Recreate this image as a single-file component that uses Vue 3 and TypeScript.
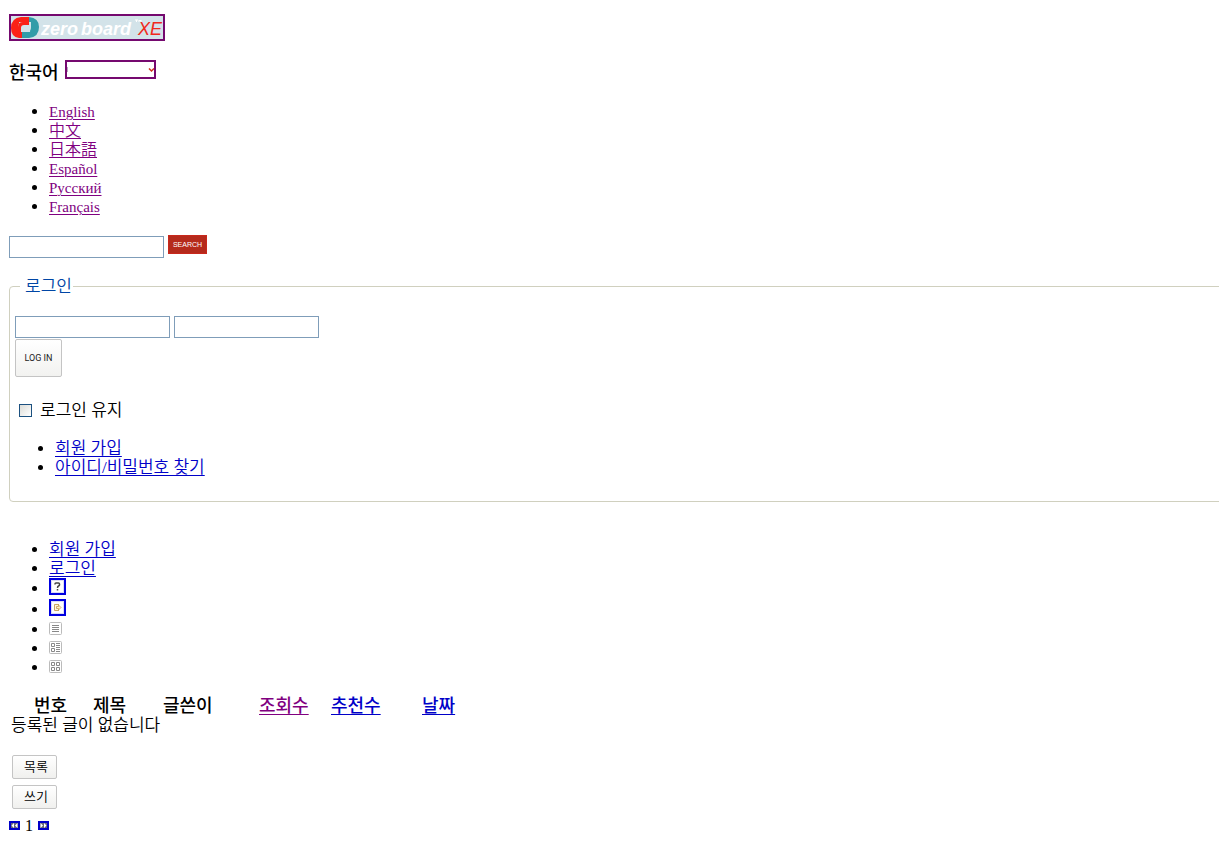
<script setup lang="ts">
interface Column {
  key: string
  label: string
  sortable: boolean
  visited?: boolean
}

const languages: { label: string; cjk: boolean }[] = [
  { label: 'English', cjk: false },
  { label: '中文', cjk: true },
  { label: '日本語', cjk: true },
  { label: 'Español', cjk: false },
  { label: 'Русский', cjk: false },
  { label: 'Français', cjk: false },
]

const columns: Column[] = [
  { key: 'no', label: '번호', sortable: false },
  { key: 'title', label: '제목', sortable: false },
  { key: 'author', label: '글쓴이', sortable: false },
  { key: 'views', label: '조회수', sortable: true, visited: true },
  { key: 'votes', label: '추천수', sortable: true },
  { key: 'date', label: '날짜', sortable: true },
]
</script>

<template>
  <div class="page">
    <header>
      <a class="logo" href="#" aria-label="zeroboard XE">
        <svg width="152" height="23" viewBox="0 0 152 23">
          <rect width="152" height="23" fill="#d3e3e9" />
          <path d="M18 1H10Q0 2 0 12Q0 21 8 22H11V16H8V6H18Z" fill="#fb2117" />
          <path d="M18 1Q28 2 28 11Q28 21 18 22H11V16H19L20 6H18Z" fill="#319ca8" />
          <path d="M7 16V11Q7 6 12 6H20V11Q20 16 15 16Z" fill="#d3e3e9" />
          <path d="M7 11Q7 6 12 6H18V9H13Q10 9 10 12V16H7Z" fill="#fb2117" />
          <text x="30" y="19" class="logo-name">zero</text>
          <text x="70" y="19" class="logo-name">board</text>
          <path d="M124 4H127M125.500 4V6M128 6V4L129 5L130 4V6" stroke="#fff" stroke-width="1" fill="none" />
          <text x="127" y="19" class="logo-xe">XE</text>
        </svg>
      </a>
      <div class="language">
        <strong>한국어</strong>
        <button type="button" class="language-toggle" aria-label="한국어">
          <svg width="87" height="15" viewBox="0 0 87 15">
            <path d="M0.500 5V10" stroke="#b9a3bd" />
            <path d="M82 6.500L84.500 9L87 6.500" fill="none" stroke="#d0301c" stroke-width="1.500" />
          </svg>
        </button>
      </div>
      <ul class="links">
        <li v-for="lang in languages" :key="lang.label">
          <a class="visited" :class="lang.cjk ? 'han' : 'latin'" href="#">{{ lang.label }}</a>
        </li>
      </ul>
    </header>

    <form class="search" @submit.prevent>
      <input class="field wide" type="text" aria-label="Search">
      <button class="search-button" type="submit">SEARCH</button>
    </form>

    <form @submit.prevent>
      <fieldset>
        <legend>로그인</legend>
        <div class="credentials">
          <input class="field wide" type="text" aria-label="ID">
          <input class="field narrow" type="password" aria-label="Password">
        </div>
        <button class="login-button" type="submit">LOG IN</button>
        <div class="keep">
          <input id="keep" type="checkbox">
          <label for="keep">로그인 유지</label>
        </div>
        <ul class="links">
          <li><a href="#">회원 가입</a></li>
          <li><a href="#">아이디/비밀번호 찾기</a></li>
        </ul>
      </fieldset>
    </form>

    <ul class="links board-menu">
      <li><a href="#">회원 가입</a></li>
      <li><a href="#">로그인</a></li>
      <li class="framed">
        <a class="icon-link" href="#" aria-label="Help">
          <svg width="13" height="13" viewBox="0 0 13 13">
            <rect width="13" height="13" fill="#dcdcf4" />
            <rect x="1" y="1" width="11" height="11" fill="#fff" />
            <path d="M4 4.500V4Q4 3 5 3H7.500Q8.500 3 8.500 4V5Q8.500 5.500 7.500 6Q6.500 6.500 6.500 8M6.500 9V10.500" fill="none" stroke="#444" stroke-width="1.500" />
          </svg>
        </a>
      </li>
      <li class="framed">
        <a class="icon-link" href="#" aria-label="Login">
          <svg width="13" height="13" viewBox="0 0 13 13">
            <rect width="13" height="13" fill="#dcdcf4" />
            <rect x="1" y="1" width="11" height="11" fill="#fff" />
            <path d="M8 3.500H3.500V9.500H8" fill="#fff6dd" stroke="#c9a562" />
            <path d="M5.500 5.500H7.500V4L10 6.500L7.500 9V7.500H5.500Z" fill="#fff0bd" stroke="#c39b52" stroke-width="0.800" />
          </svg>
        </a>
      </li>
      <li>
        <a class="icon-link plain" href="#" aria-label="List">
          <svg width="13" height="13" viewBox="0 0 13 13">
            <rect x="0.500" y="0.500" width="12" height="12" rx="1" fill="#fff" stroke="#bbb" />
            <path d="M3 3.500H10M3 5.500H10M3 7.500H10M3 9.500H10" stroke="#888" />
          </svg>
        </a>
      </li>
      <li>
        <a class="icon-link plain" href="#" aria-label="Webzine">
          <svg width="13" height="13" viewBox="0 0 13 13">
            <rect x="0.500" y="0.500" width="12" height="12" rx="1" fill="#fff" stroke="#bbb" />
            <path d="M2.500 2.500H5.500V5.500H2.500ZM2.500 7.500H5.500V10.500H2.500ZM7 2.500H11M7 4.500H11M7 6.500H11M7 8.500H11M7 10.500H11" fill="none" stroke="#888" />
          </svg>
        </a>
      </li>
      <li>
        <a class="icon-link plain" href="#" aria-label="Gallery">
          <svg width="13" height="13" viewBox="0 0 13 13">
            <rect x="0.500" y="0.500" width="12" height="12" rx="1" fill="#fff" stroke="#bbb" />
            <path d="M2.500 2.500H5.500V5.500H2.500ZM7.500 2.500H10.500V5.500H7.500ZM2.500 7.500H5.500V10.500H2.500ZM7.500 7.500H10.500V10.500H7.500Z" fill="none" stroke="#888" />
          </svg>
        </a>
      </li>
    </ul>

    <table>
      <thead>
        <tr>
          <th v-for="col in columns" :key="col.key" :class="col.key" scope="col">
            <a v-if="col.sortable" href="#" :class="{ visited: col.visited }">{{ col.label }}</a>
            <template v-else>{{ col.label }}</template>
          </th>
        </tr>
      </thead>
      <tbody>
        <tr>
          <td :colspan="columns.length">등록된 글이 없습니다</td>
        </tr>
      </tbody>
    </table>

    <div class="actions">
      <button type="button">목록</button>
      <button type="button">쓰기</button>
    </div>

    <nav class="pages">
      <a href="#" aria-label="First page">
        <svg width="7" height="5" viewBox="0 0 7 5">
          <rect width="7" height="5" fill="#667" />
          <path d="M3 0V5L0.500 2.500ZM6.500 0V5L4 2.500Z" fill="#fff" />
        </svg>
      </a>
      <span>1</span>
      <a href="#" aria-label="Last page">
        <svg width="7" height="5" viewBox="0 0 7 5">
          <rect width="7" height="5" fill="#667" />
          <path d="M0.500 0V5L3 2.500ZM4 0V5L6.500 2.500Z" fill="#fff" />
        </svg>
      </a>
    </nav>
  </div>
</template>

<style>
body {
  margin: 0;
  background: #fff;
}
</style>

<style scoped>
.page {
  box-sizing: border-box;
  overflow: hidden;
  padding: 14px 0 8px 9px;
  color: #000;
  font-family: "Liberation Serif", "Noto Sans CJK KR", serif;
  font-size: 17px;
  font-weight: 350;
  line-height: 19px;
}

a {
  color: #0000c8;
  text-decoration-thickness: 1px;
  text-underline-offset: 2px;
}

a.visited {
  color: #800080;
}

svg {
  display: block;
}

button {
  box-sizing: border-box;
  padding: 0;
}

.logo {
  display: block;
  width: fit-content;
  border: 2px solid #75096f;
}

.logo-name {
  fill: #fff;
  font-family: "Liberation Sans", sans-serif;
  font-size: 18px;
  font-style: italic;
  font-weight: 700;
}

.logo-xe {
  fill: #f02a1c;
  font-family: "Liberation Sans", sans-serif;
  font-size: 18px;
  font-style: italic;
  font-weight: 400;
}

.language {
  display: flex;
  gap: 6px;
  margin-top: 19px;
}

.language strong {
  padding-top: 4px;
  font-size: 18px;
  font-weight: 500;
}

.language-toggle {
  height: 19px;
  border: 2px solid #75096f;
  background: #fff;
}

.links {
  margin: 0;
  padding: 0 0 0 40px;
}

header .links {
  margin-top: 19px;
}

.latin {
  font-size: 15px;
  line-height: 1;
}

.han {
  font-family: "Liberation Serif", "Noto Sans CJK JP", serif;
  font-size: 16px;
  line-height: 1;
}

.field {
  box-sizing: border-box;
  height: 22px;
  margin: 0;
  border: 1px solid #7f9db9;
  background: #fff;
}

.wide {
  width: 155px;
}

.narrow {
  width: 145px;
}

.search {
  display: flex;
  align-items: flex-start;
  gap: 4px;
  margin: 19px 0;
}

.search .field {
  margin-top: 1px;
}

.search-button {
  width: 39px;
  height: 19px;
  border: 1px solid #c9281c;
  background: #b52a1c;
  color: #fff;
  font: 400 7px/16px "Liberation Sans", sans-serif;
}

fieldset {
  min-width: 0;
  margin: 0 -6px 0 0;
  padding: 20px 5px 24px;
  border: 1px solid #d0d0bf;
  border-radius: 4px;
}

legend {
  margin-left: 5px;
  padding: 0 1px 0 5px;
  color: #0046a5;
}

.credentials {
  display: flex;
  gap: 4px;
}

.login-button {
  display: block;
  width: 47px;
  height: 38px;
  margin-top: 1px;
  border: 1px solid #c4c4c4;
  border-radius: 2px;
  background: linear-gradient(#fff, #f2f2f0);
  color: #222;
  font: 400 9px/36px Roboto, sans-serif;
}

.keep {
  display: flex;
  align-items: center;
  gap: 8px;
  margin: 24px 0 19px 4px;
}

.keep input {
  box-sizing: border-box;
  appearance: none;
  width: 13px;
  height: 13px;
  margin: 0;
  border: 1px solid #1c5180;
  background: linear-gradient(135deg, #dcdcd7, #fff);
}

.board-menu {
  margin-top: 38px;
}

.board-menu .framed {
  line-height: 21px;
}

.icon-link {
  display: inline-block;
  border: 2px solid #0000e0;
  vertical-align: top;
}

.icon-link.plain {
  margin-top: 2px;
  border: 0;
}

table {
  margin-top: 19px;
  border-collapse: collapse;
  table-layout: fixed;
  width: 473px;
  line-height: 20px;
}

th {
  padding: 0;
  font-size: 18px;
  font-weight: 500;
  text-align: left;
}

th.no {
  width: 59px;
  padding-left: 25px;
}

th.title {
  width: 70px;
}

th.author {
  width: 96px;
}

th.views {
  width: 72px;
}

th.votes {
  width: 91px;
}

td {
  padding: 0 0 0 2px;
}

.actions {
  display: flex;
  flex-direction: column;
  gap: 6px;
  margin: 19px 0 7px 3px;
}

.actions button {
  width: 45px;
  height: 24px;
  padding: 0 0 3px 3px;
  border: 1px solid #c4c4c4;
  border-radius: 2px;
  background: linear-gradient(#fff, #f0f0ee);
  color: #000;
  font: 350 13px/19px "Noto Sans CJK KR", sans-serif;
}

.pages {
  display: flex;
  align-items: center;
  gap: 5px;
  font-size: 16px;
}

.pages a {
  border: 2px solid #0000c8;
}
</style>
